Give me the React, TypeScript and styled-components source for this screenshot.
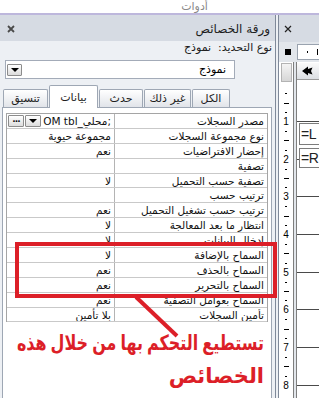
import React, { FC } from 'react';
import styled, { createGlobalStyle } from 'styled-components';

const GlobalStyle = createGlobalStyle`
  html, body {
    margin: 0;
    padding: 0;
    background: #ffffff;
  }
  body {
    font-family: "DejaVu Sans", sans-serif;
  }
`;

const Page = styled.div`
  position: relative;
  width: 319px;
  height: 398px;
  overflow: hidden;
  display: flex;
  flex-direction: column;
  background: #ffffff;
`;

const Ribbon = styled.div`
  height: 13px;
  flex: none;
  display: flex;
  justify-content: center;
  align-items: flex-end;
  padding-left: 70px;
  border-bottom: 2px solid #bdb7dc;
  overflow: hidden;
`;
const RibbonLabel = styled.span`
  font-size: 11px;
  line-height: 13px;
  color: #8a8a8a;
`;

const Workspace = styled.div`
  flex: 1;
  min-height: 0;
  display: flex;
`;

/* ---------- property sheet ---------- */

const Sheet = styled.div`
  width: 275px;
  flex: none;
  display: flex;
  flex-direction: column;
  background: #edf0f4;
  border-right: 4px double #7f8999;
`;
const SheetHeader = styled.div`
  height: 26px;
  flex: none;
  display: flex;
  align-items: center;
  justify-content: space-between;
  padding: 2px 5px 0 7px;
  box-sizing: border-box;
  background: #d6dbe3;
`;
const Title = styled.span`
  font-size: 12px;
  color: #1c1c1c;
  direction: rtl;
`;
const SelectionType = styled.div`
  height: 14px;
  line-height: 14px;
  font-size: 11px;
  text-align: right;
  padding-right: 3px;
  direction: rtl;
  color: #202020;
`;
const Combo = styled.div`
  margin: 5px 0 0 5px;
  width: 230px;
  height: 19px;
  box-sizing: border-box;
  display: flex;
  align-items: center;
  background: #ffffff;
  border: 1px solid #a3abb8;
`;
const DropButton = styled.div<{ $w: number }>`
  width: ${(p) => p.$w}px;
  height: 12px;
  margin-left: 1px;
  flex: none;
  box-sizing: border-box;
  display: flex;
  align-items: center;
  justify-content: center;
  border: 1px solid #8c8c8c;
  border-radius: 1px;
  background: linear-gradient(#ffffff, #dcdcdc);
`;
const Triangle = styled.span`
  width: 0;
  height: 0;
  border-left: 4px solid transparent;
  border-right: 4px solid transparent;
  border-top: 4px solid #000000;
  margin-top: 1px;
`;
const Dots = styled.span`
  font-size: 9px;
  font-weight: bold;
  line-height: 8px;
  letter-spacing: -1px;
  margin-top: -3px;
`;
const ComboText = styled.span`
  flex: 1;
  text-align: right;
  padding-right: 8px;
  font-size: 11px;
  direction: rtl;
`;

const TabStrip = styled.div`
  margin-top: 6px;
  height: 22px;
  flex: none;
  display: flex;
  align-items: flex-end;
  gap: 1px;
  padding-left: 3px;
  position: relative;
  z-index: 1;
`;
const Tab = styled.div<{ $w: number; $active?: boolean }>`
  width: ${(p) => p.$w}px;
  height: ${(p) => (p.$active ? 23 : 18)}px;
  margin-bottom: ${(p) => (p.$active ? -1 : 0)}px;
  box-sizing: border-box;
  display: flex;
  align-items: center;
  justify-content: center;
  font-size: 11px;
  color: #1e1e1e;
  border: 1px solid #9ea7b4;
  border-bottom: none;
  border-radius: 2px 2px 0 0;
  background: ${(p) =>
    p.$active ? '#ffffff' : 'linear-gradient(#ffffff, #e1e4e9)'};
  direction: rtl;
`;

const TabPanel = styled.div`
  flex: 1;
  margin: 0 3px 0 2px;
  padding: 5px 3px 0 3px;
  background: #ffffff;
  border: 1px solid #9ea7b4;
  border-bottom: none;
`;
const Grid = styled.div`
  border: 1px solid #a5a5a5;
  border-bottom: none;
`;
const Row = styled.div`
  display: grid;
  grid-template-columns: 108px 1fr;
  height: 14.9px;
  box-sizing: border-box;
  padding-top: 1px;
  border-bottom: 1px solid #c9c9c9;
  font-size: 10.5px;
  line-height: 13px;
  color: #111111;
`;
const ValueCell = styled.div`
  display: flex;
  align-items: center;
  overflow: hidden;
  margin-top: -1px;
  border-right: 1px solid #b4b4b4;
`;
const CellText = styled.span`
  flex: 1;
  min-width: 0;
  white-space: nowrap;
  text-align: right;
  direction: rtl;
  padding: 1px 3px 0 0;
`;
const LtrRun = styled.span`
  direction: ltr;
  unicode-bidi: isolate;
`;
const LabelCell = styled.div`
  overflow: hidden;
  white-space: nowrap;
  text-align: right;
  direction: rtl;
  padding-right: 3px;
`;

const Callout = styled.div`
  margin-top: 5px;
  padding-right: 4px;
  direction: rtl;
  text-align: right;
  color: #dc1f28;
  font-size: 21px;
  font-weight: bold;
  line-height: 33px;
  word-spacing: -2px;
`;
const CalloutLine = styled.div<{ $scale: number }>`
  white-space: nowrap;
  transform: scaleX(${(p) => p.$scale});
  transform-origin: right center;
`;

/* ---------- form design panel ---------- */

const Design = styled.div`
  flex: 1;
  display: flex;
  flex-direction: column;
  background: #e2e6eb;
`;
const DesignHeader = styled.div`
  height: 27px;
  flex: none;
  display: flex;
  align-items: center;
  padding-left: 5px;
  background: #d6dbe3;
`;
const RulerBar = styled.div`
  height: 20px;
  flex: none;
  display: flex;
  align-items: center;
`;
const Selector = styled.div`
  width: 6px;
  height: 6px;
  margin-left: 6px;
  background: #000000;
`;
const TopRuler = styled.div`
  margin-left: auto;
  width: 22px;
  height: 16px;
  box-sizing: border-box;
  display: flex;
  align-items: center;
  gap: 9px;
  padding-left: 9px;
  background: #ffffff;
  border: 1px solid #9aa3af;
  border-right: none;
`;
const TickDot = styled.span`
  width: 1px;
  height: 2px;
  background: #000000;
`;
const TickBar = styled.span`
  width: 1px;
  height: 6px;
  background: #000000;
`;
const DesignBody = styled.div`
  flex: 1;
  min-height: 0;
  display: flex;
`;
const Ruler = styled.div`
  width: 14px;
  flex: none;
  display: flex;
  flex-direction: column;
  background: #ffffff;
  border-right: 1px solid #7e7e7e;
`;
const RulerCap = styled.div`
  height: 19px;
  margin: 1px 1px 0 2px;
  flex: none;
  box-sizing: border-box;
  background: linear-gradient(#f4f4f4, #d6d6d6);
  border: 1px solid #b3b3b3;
`;
const Marks = styled.div`
  padding-top: 7px;
  display: flex;
  flex-direction: column;
`;
const Slot = styled.div`
  height: 9.425px;
  display: flex;
  align-items: center;
  justify-content: center;
  font-family: "Liberation Sans", sans-serif;
  font-size: 10px;
  line-height: 10px;
  color: #000000;
`;
const Mark = styled.span<{ $w: number }>`
  width: ${(p) => p.$w}px;
  height: 1px;
  background: #000000;
`;
const Canvas = styled.div`
  flex: 1;
  position: relative;
  margin-left: 2px;
  display: flex;
  flex-direction: column;
  background: #ffffff;
  border-left: 1px solid #7e7e7e;
  overflow: hidden;
`;
const SectionBar = styled.div`
  height: 17px;
  margin-top: 1px;
  flex: none;
  box-sizing: border-box;
  display: flex;
  align-items: center;
  padding-left: 5px;
  background: linear-gradient(#fafafa, #dcdfe3);
  border-bottom: 1px solid #9b9b9b;
`;
const CanvasBody = styled.div`
  flex: 1;
  padding-top: 41px;
  display: flex;
  flex-direction: column;
`;
const InchRow = styled.div`
  height: 37.7px;
  flex: none;
  box-sizing: border-box;
  border-top: 1px solid #4a4a4a;
`;
const Control = styled.div<{ $top: number; $h: number }>`
  position: absolute;
  left: 2px;
  top: ${(p) => p.$top}px;
  width: 40px;
  height: ${(p) => p.$h}px;
  box-sizing: border-box;
  padding-left: 1px;
  display: flex;
  align-items: center;
  font-family: "Liberation Sans", sans-serif;
  font-size: 14px;
  letter-spacing: -0.5px;
  color: #222;
  background: #ffffff;
  border: 1px solid #7c7c7c;
`;

const Overlay = styled.svg`
  position: absolute;
  left: 0;
  top: 0;
  pointer-events: none;
`;

const CloseIcon: FC<{ color: string; weight: number }> = ({ color, weight }) => (
  <svg width="8" height="8" viewBox="0 0 8 8">
    <path d="M1 1 L7 7 M7 1 L1 7" stroke={color} strokeWidth={weight} />
  </svg>
);

const SectionIcon: FC = () => (
  <svg width="11" height="10" viewBox="0 0 11 10">
    <path d="M0 5 L6 0.5 L6 3 L10.5 1.5 L9 5 L10.5 8.5 L6 7 L6 9.5 Z" fill="#000" />
  </svg>
);

interface Prop {
  label: string;
  value?: string;
  source?: boolean;
}

const props: Prop[] = [
  { label: 'مصدر السجلات', source: true },
  { label: 'نوع مجموعة السجلات', value: 'مجموعة حيوية' },
  { label: 'إحضار الافتراضيات', value: 'نعم' },
  { label: 'تصفية' },
  { label: 'تصفية حسب التحميل', value: 'لا' },
  { label: 'ترتيب حسب' },
  { label: 'ترتيب حسب تشغيل التحميل', value: 'نعم' },
  { label: 'انتظار ما بعد المعالجة', value: 'لا' },
  { label: 'إدخال البيانات', value: 'لا' },
  { label: 'السماح بالإضافة', value: 'لا' },
  { label: 'السماح بالحذف', value: 'نعم' },
  { label: 'السماح بالتحرير', value: 'نعم' },
  { label: 'السماح بعوامل التصفية', value: 'نعم' },
  { label: 'تأمين السجلات', value: 'بلا تأمين' },
];

const tabs = [
  { name: 'تنسيق', w: 45 },
  { name: 'بيانات', w: 49, active: true },
  { name: 'حدث', w: 44 },
  { name: 'غير ذلك', w: 47 },
  { name: 'الكل', w: 38 },
];

const inches = [1, 2, 3, 4, 5, 6, 7, 8];

const App: FC = () => (
  <Page>
    <GlobalStyle />
    <Ribbon>
      <RibbonLabel>أدوات</RibbonLabel>
    </Ribbon>
    <Workspace>
      <Sheet>
        <SheetHeader>
          <CloseIcon color="#4a4a4a" weight={1.8} />
          <Title>ورقة الخصائص</Title>
        </SheetHeader>
        <SelectionType>نوع التحديد:&nbsp; نموذج</SelectionType>
        <Combo>
          <DropButton $w={15}>
            <Triangle />
          </DropButton>
          <ComboText>نموذج</ComboText>
        </Combo>
        <TabStrip>
          {tabs.map((t) => (
            <Tab key={t.name} $w={t.w} $active={t.active}>
              {t.name}
            </Tab>
          ))}
        </TabStrip>
        <TabPanel>
          <Grid>
            {props.map((p) => (
              <Row key={p.label}>
                <ValueCell>
                  {p.source && (
                    <>
                      <DropButton $w={16}>
                        <Dots>...</Dots>
                      </DropButton>
                      <DropButton $w={16}>
                        <Triangle />
                      </DropButton>
                    </>
                  )}
                  <CellText>
                    {p.source ? <LtrRun>OM tbl_محلي;</LtrRun> : p.value}
                  </CellText>
                </ValueCell>
                <LabelCell>{p.label}</LabelCell>
              </Row>
            ))}
          </Grid>
          <Callout>
            <CalloutLine $scale={0.76}>تستطيع التحكم بها من خلال هذه</CalloutLine>
            <CalloutLine $scale={1}>الخصائص</CalloutLine>
          </Callout>
        </TabPanel>
      </Sheet>
      <Design>
        <DesignHeader>
          <CloseIcon color="#222" weight={1.2} />
        </DesignHeader>
        <RulerBar>
          <Selector />
          <TopRuler>
            <TickDot />
            <TickBar />
          </TopRuler>
        </RulerBar>
        <DesignBody>
          <Ruler>
            <RulerCap />
            <Marks>
              {inches.map((n) => (
                <React.Fragment key={n}>
                  <Slot>
                    <Mark $w={2} />
                  </Slot>
                  <Slot>
                    <Mark $w={5} />
                  </Slot>
                  <Slot>
                    <Mark $w={2} />
                  </Slot>
                  <Slot>{n}</Slot>
                </React.Fragment>
              ))}
            </Marks>
          </Ruler>
          <Canvas>
            <SectionBar>
              <SectionIcon />
            </SectionBar>
            <CanvasBody>
              {inches.map((n) => (
                <InchRow key={n} />
              ))}
            </CanvasBody>
            <Control $top={61} $h={22}>=L</Control>
            <Control $top={86} $h={20}>=R</Control>
          </Canvas>
        </DesignBody>
      </Design>
    </Workspace>
    <Overlay width="319" height="398" viewBox="0 0 319 398">
      <rect x="17" y="244" width="258" height="52" fill="none" stroke="#dc1f28" strokeWidth="4" />
      <line x1="136" y1="297" x2="177" y2="336" stroke="#dc1f28" strokeWidth="4" />
    </Overlay>
  </Page>
);

export default App;
